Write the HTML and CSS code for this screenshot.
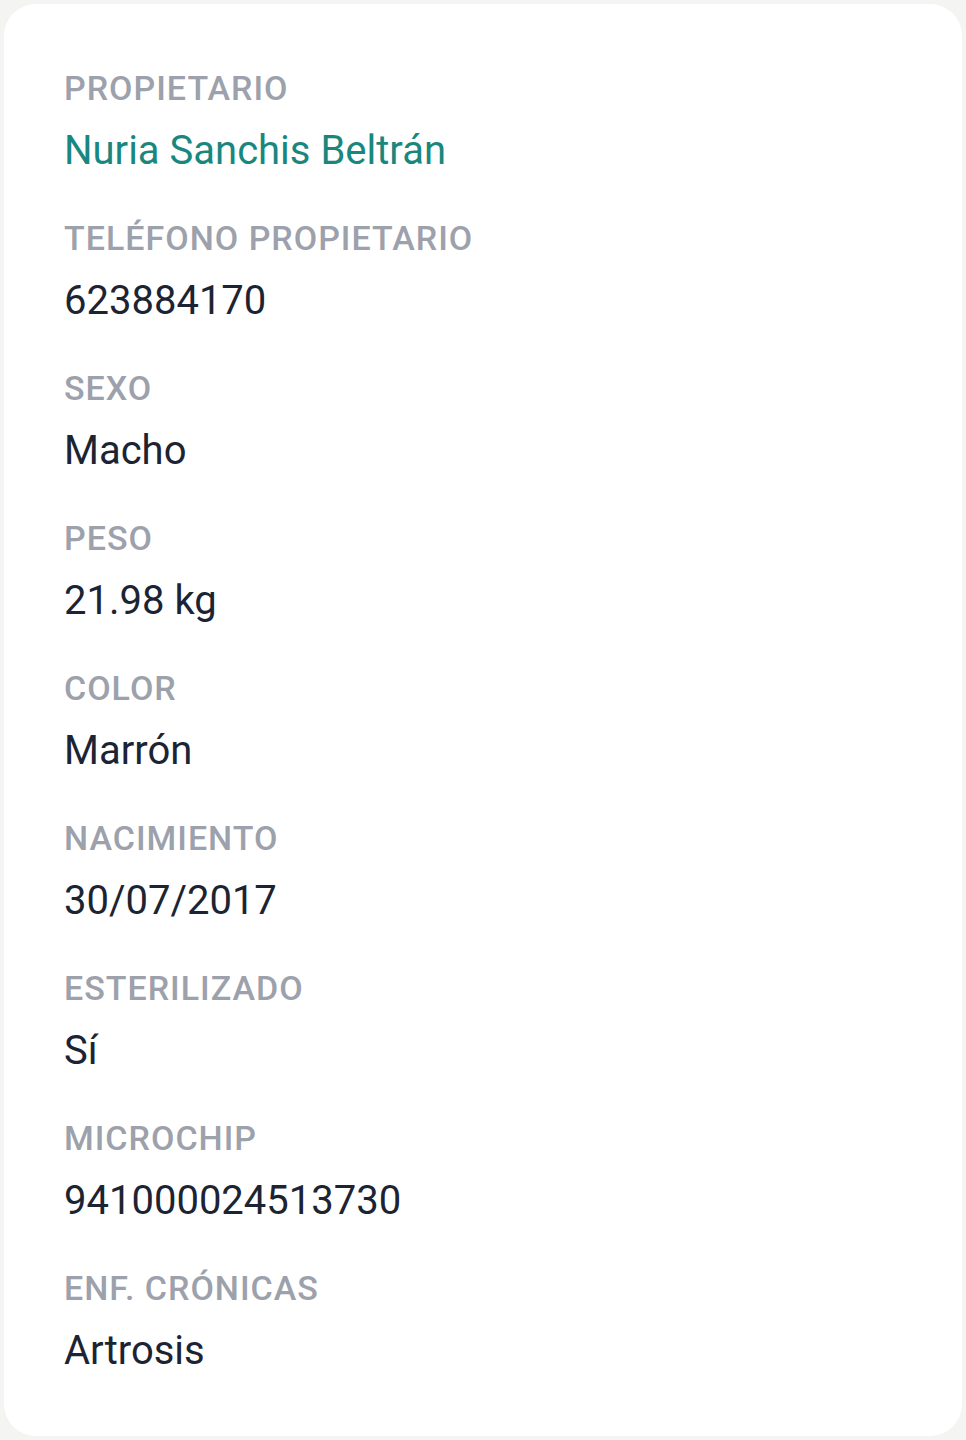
FILE: index.html
```html
<!DOCTYPE html>
<html lang="es">
<head>
  <meta charset="UTF-8">
  <meta name="viewport" content="width=device-width, initial-scale=1.0">
  <title>Ficha del paciente</title>
  <link rel="stylesheet" href="styles.css">
</head>
<body>
  <div class="card">
    <div class="field">
      <div class="label">Propietario</div>
      <div class="value owner">Nuria Sanchis Beltrán</div>
    </div>
    <div class="field">
      <div class="label">Teléfono propietario</div>
      <div class="value">623884170</div>
    </div>
    <div class="field">
      <div class="label">Sexo</div>
      <div class="value">Macho</div>
    </div>
    <div class="field">
      <div class="label">Peso</div>
      <div class="value">21.98 kg</div>
    </div>
    <div class="field">
      <div class="label">Color</div>
      <div class="value">Marrón</div>
    </div>
    <div class="field">
      <div class="label">Nacimiento</div>
      <div class="value">30/07/2017</div>
    </div>
    <div class="field">
      <div class="label">Esterilizado</div>
      <div class="value">Sí</div>
    </div>
    <div class="field">
      <div class="label">Microchip</div>
      <div class="value">941000024513730</div>
    </div>
    <div class="field">
      <div class="label">Enf. crónicas</div>
      <div class="value">Artrosis</div>
    </div>
  </div>
</body>
</html>
```

FILE: styles.css
```css
html, body {
  height: 100%;
}

body {
  margin: 0;
  padding: 4px;
  box-sizing: border-box;
  background-color: #f4f4f2;
  font-family: Roboto, "Liberation Sans", sans-serif;
}

.card {
  height: 100%;
  box-sizing: border-box;
  background-color: #ffffff;
  border-radius: 32px;
  padding: 64px 60px 0;
  display: flex;
  flex-direction: column;
  gap: 42px;
}

.field {
  display: flex;
  flex-direction: column;
  gap: 18px;
}

.label {
  font-size: 34px;
  line-height: 40px;
  font-weight: 500;
  letter-spacing: 1px;
  text-transform: uppercase;
  color: #9ca1ab;
}

.value {
  font-size: 40px;
  line-height: 50px;
  color: #1c2433;
}

.owner {
  color: #1a877e;
}
```
